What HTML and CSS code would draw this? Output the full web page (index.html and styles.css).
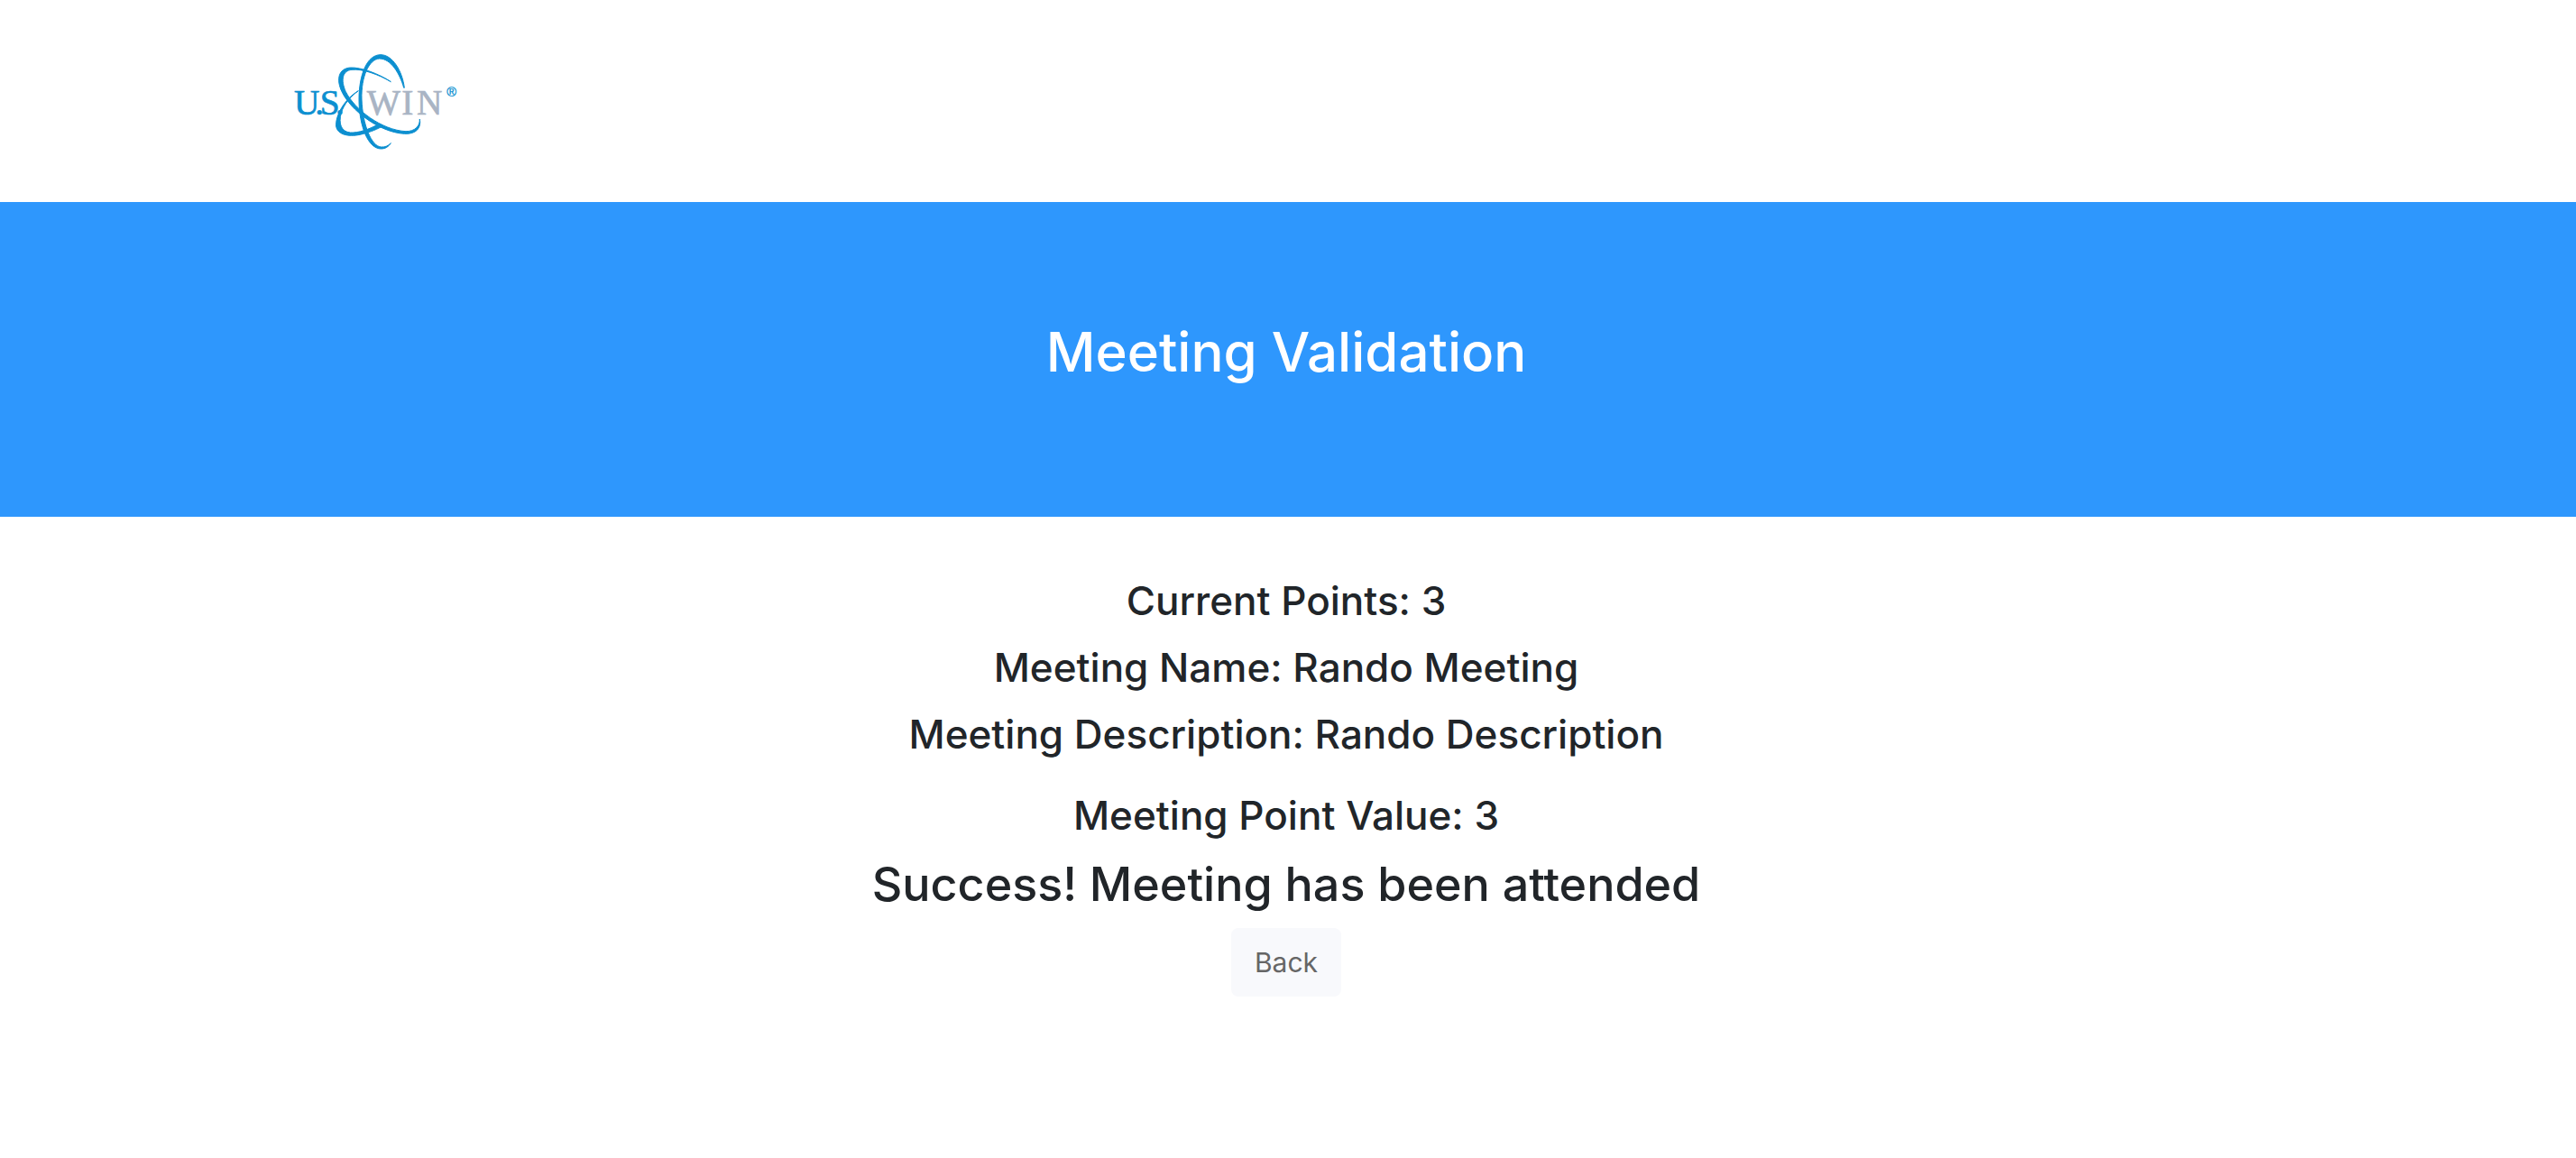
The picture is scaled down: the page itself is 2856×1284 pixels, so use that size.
FILE: index.html
```html
<!DOCTYPE html>
<html lang="en">
<head>
<meta charset="utf-8">
<meta name="viewport" content="width=device-width, initial-scale=1">
<title>Meeting Validation</title>
<link rel="stylesheet" href="styles.css">
</head>
<body>
<header class="site-header">
  <div class="container">
    <a class="brand" href="#" aria-label="U.S. WIN home">
      <svg class="brand-logo" viewBox="0 0 630 390" aria-hidden="true">
        <g class="logo-orbit">
          <path d="M415 142C408 85 375 32 336 32C290 32 264 100 264 180C264 270 295 345 337 345C352 345 362 338 370 326C360 336 350 340 338 339C305 337 276 265 273 180C271 105 297 47 332 45C370 45 400 95 413 142Z"/>
          <path d="M370 122C330 95 270 73 235 75C195 78 188 115 207 155C235 215 330 290 415 295C455 297 472 275 466 246C467 270 450 287 420 287C340 283 250 215 220 155C203 118 208 85 240 82C275 78 330 98 370 122Z"/>
          <path d="M262 152C215 180 185 235 188 270C192 300 235 307 275 296C305 288 325 280 345 268L330 262C300 280 260 293 235 291C205 288 195 262 205 225C215 195 235 172 262 152Z"/>
        </g>
        <text class="logo-us" x="48 118 134 186" y="230">U.S.</text>
        <text class="logo-win" x="290 406 456" y="230">WIN</text>
        <text class="logo-mark" x="556" y="172">®</text>
      </svg>
    </a>
  </div>
</header>
<section class="banner">
  <h1 class="banner-title">Meeting Validation</h1>
</section>
<main class="content">
  <div class="details">
    <h2 class="detail">Current Points: 3</h2>
    <h2 class="detail">Meeting Name: Rando Meeting</h2>
    <h2 class="detail">Meeting Description: Rando Description</h2>
  </div>
  <h2 class="detail">Meeting Point Value: 3</h2>
  <h2 class="status">Success! Meeting has been attended</h2>
  <button class="back" type="button">Back</button>
</main>
</body>
</html>
```
FILE: styles.css
```css
* {
  box-sizing: border-box;
}

body {
  margin: 0;
  background: #fff;
  color: #212529;
  font-family: Inter, "Liberation Sans", sans-serif;
}

h1,
h2 {
  margin: 0;
  font-weight: 500;
}

.site-header {
  padding: 50px 16px 44px;
}

.container {
  max-width: 2236px;
  margin: 0 auto;
}

.brand {
  display: inline-block;
  vertical-align: top;
}

.brand-logo {
  display: block;
  width: 210px;
  height: 130px;
}

.logo-orbit,
.logo-us,
.logo-mark {
  fill: #0c8fd0;
  stroke: #0c8fd0;
}

.logo-orbit {
  stroke-width: 3;
}

.logo-us,
.logo-win {
  font: 118px "Liberation Serif", serif;
  stroke-width: 2;
}

.logo-win {
  fill: #a9b4c4;
  stroke: #a9b4c4;
}

.logo-mark {
  font: 44px "Liberation Sans", sans-serif;
}

.banner {
  padding: 128px 20px 144px 16px;
  background: #2e97fd;
  text-align: center;
}

.banner-title {
  color: #fff;
  font-size: 60px;
  line-height: 77px;
}

.content {
  display: flex;
  flex-direction: column;
  align-items: center;
  gap: 16px;
  padding: 64px 20px 64px 16px;
  text-align: center;
}

.details {
  display: grid;
  gap: 16px;
  margin-bottom: 16px;
}

.detail {
  font-size: 44px;
  line-height: 58px;
}

.status {
  font-size: 52px;
  line-height: 64px;
}

.back {
  padding: 12px 24px;
  border: 2px solid #f8f9fc;
  border-radius: 8px;
  background: #f8f9fc;
  color: #666;
  font: 30px/48px Inter, "Liberation Sans", sans-serif;
}
```
